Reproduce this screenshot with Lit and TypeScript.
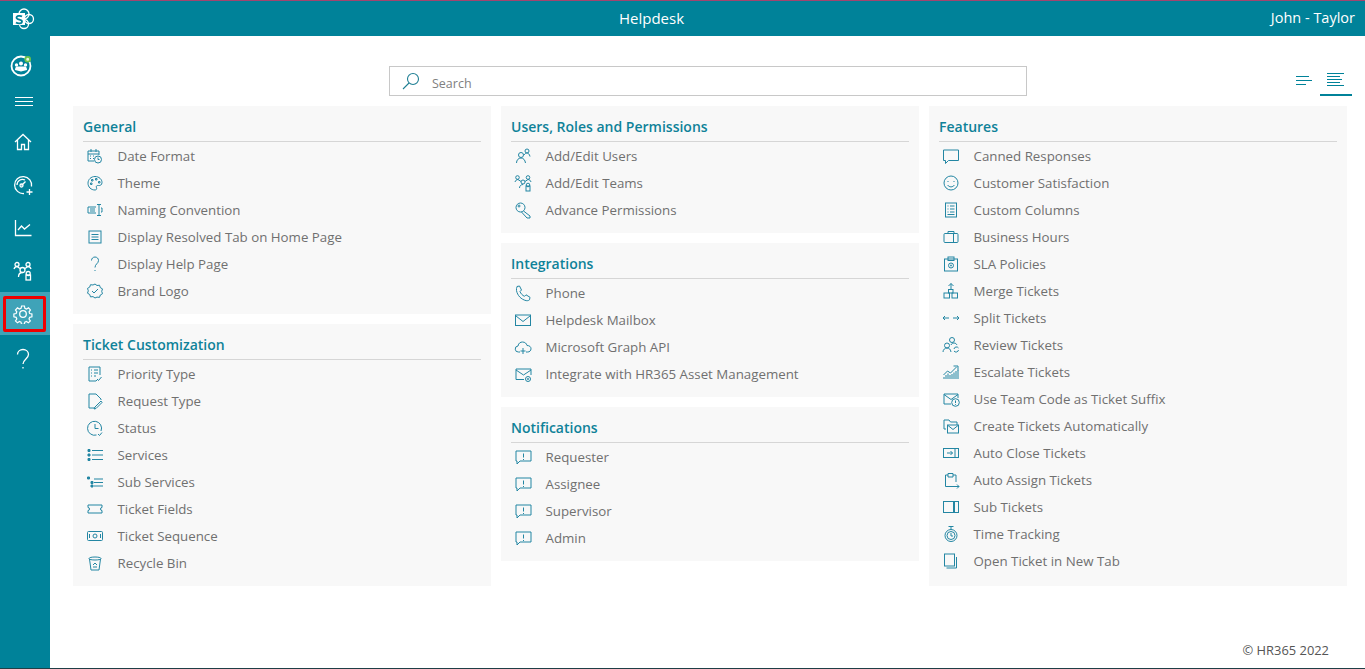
import { LitElement, html, svg, css } from "lit";
import { customElement } from "lit/decorators.js";

// all list icons share a 18x18 viewBox, stroked in the teal colour
const icons: Record<string, unknown> = {
  date: svg`<path d="M2 4h11v4M2 4v10h6M2 7h11M5 2v3M10 2v3M4 9h1M7 9h1M4 11.500h1M7 11.500h1"/><circle cx="12" cy="12.500" r="3.500"/><path d="M12 10.500v2h1.500"/>`,
  theme: svg`<path d="M9 2.500c4 0 7 2.800 7 6 0 2.500-2 3.300-3.500 3-1.700-.3-2.800.7-2 2.300.6 1.300-.3 2.200-1.500 2.200-4 0-7-3-7-6.800 0-3.700 3-6.700 7-6.700z"/><path d="M5.500 5.500h1.500v1.500h-1.500zM9.500 4.500h1.500v1.500h-1.500zM12.500 7.500h1.500v1.500h-1.500zM4.500 9h1.500v1.500h-1.500z"/>`,
  naming: svg`<path d="M10 6H2v6h8M4 8h5M4 10h5M13 3.500v11M11 3.500h4M11 14.500h4M15 7h1v4h-1"/>`,
  page: svg`<rect x="3" y="3" width="12" height="12"/><path d="M5.500 6.500h7M5.500 9h7M5.500 11.500h7"/>`,
  help: svg`<path d="M5.500 5.500c0-2 1.500-3.500 3.500-3.500s3.500 1.500 3.500 3.500c0 3-3.500 3.500-3.500 7M9 15v1"/>`,
  badge: svg`<path d="M9 2l2 1.500 2.500-.3.800 2.400 2.200 1.300-.8 2.400.8 2.400-2.200 1.300-.8 2.400-2.500-.3L9 16l-2-1.400-2.500.3-.8-2.400-2.200-1.300.8-2.400-.8-2.400 2.200-1.300.8-2.400 2.500.3z"/><path d="M6 9l2 2 4-4"/>`,
  priority: svg`<path d="M14 10V2H3v14h7l1-1M5 5h1M8 5h4M5 8h1M8 8h4M5 11h1M8 11h2M11 14l1.500 1.500L15.500 12"/>`,
  request: svg`<path d="M9 16H3V2h7l5 5v1M15 9l-6 6-1 2 2-.5 6-6z"/>`,
  status: svg`<path d="M15 12a7 7 0 1 0-4.500 4M9 5v4.500h3.500M12 15l1.500 1.500 2.500-3"/>`,
  services: svg`<path d="M6 4.500h11M6 9h11M6 13.500h11" /><path d="M2 3.500h2v2H2zM2 8h2v2H2zM2 12.500h2v2H2z" fill="currentColor"/>`,
  sub: svg`<path d="M8 6h9M8 9.500h9M8 13h9"/><path d="M1.500 4h2v2h-2zM5 8.500h2v2H5zM5 12h2v2H5z" fill="currentColor"/>`,
  ticket: svg`<path d="M2 5h14v2.500a1.500 1.500 0 0 0 0 3V13H2v-2.500a1.500 1.500 0 0 0 0-3z"/>`,
  sequence: svg`<rect x="1.500" y="4.500" width="15" height="9" rx="1"/><circle cx="9" cy="9" r="2"/><path d="M3.500 7v4M14.500 7v4"/>`,
  bin: svg`<path d="M3 4.500c0-2 12-2 12 0s-12 2-12 0zM3.500 5l1.500 11h8l1.500-11M7 11l2-2 2 2M7 13h4"/>`,
  users: svg`<circle cx="7" cy="8" r="2.500"/><path d="M2.500 16c0-3 2-5 4.500-5s4 2 4.500 5"/><circle cx="13" cy="4" r="2"/><path d="M10 8c1-1.500 2-2 3-2s2.500 1 3 3.500"/>`,
  teams: svg`<circle cx="3.500" cy="3.500" r="1.800"/><circle cx="14" cy="3.500" r="1.800"/><circle cx="9" cy="8" r="2"/><path d="M1 8c.5-1.500 1.500-2.500 3-2.500l3 2M17 8c-.5-1.500-1.500-2.500-3-2.500l-3 2M5.500 14c0-2 1.500-3.500 3.500-3.500"/><rect x="12" y="12" width="4" height="5"/><circle cx="14" cy="11" r="1.800"/>`,
  key: svg`<circle cx="6.500" cy="6.500" r="4.500"/><circle cx="5" cy="5" r="1"/><path d="M9.500 10l6.500 5v2h-3l-5.500-6"/>`,
  phone: svg`<path d="M3 2.500l2.500-.5 2 4-1.500 1.500c.7 2 2.500 4 4.500 4.800l1.500-1.500 4 2.500-.5 2.500c-1 1-2.500 1-3.500.8-5-1.300-8.500-5-9.500-10-.2-1.500 0-2.800.5-3.600z"/>`,
  mail: svg`<rect x="1.500" y="4" width="15" height="10.500"/><path d="M2 5l7 5.500L16 5"/>`,
  cloud: svg`<path d="M6 14H4.500a3 3 0 0 1-.5-6c.5-3 2.500-4 4.500-4 2.500 0 4 1.500 4.500 3.500 2.500 0 4 1.300 4 3.300 0 2-1.500 3.200-3.500 3.200H12M9 10v6M6.500 13h5"/>`,
  mailgear: svg`<path d="M10 14.500H2V4h15v6M2 5l7.500 5L17 5"/><circle cx="14" cy="14" r="2.500"/><circle cx="14" cy="14" r=".6"/>`,
  alert: svg`<path d="M2 3h15v10H6l-3 3v-3H2zM9.500 5.500v4M9.500 11v1"/>`,
  chat: svg`<path d="M1.500 3h15v10.500H6.500l-3 3v-3h-2z"/>`,
  smile: svg`<circle cx="9" cy="9" r="7"/><path d="M6 7v1M12 7v1M5.500 11c2 2.500 5 2.500 7 0"/>`,
  columns: svg`<rect x="3.500" y="2" width="11" height="14"/><path d="M5.500 5h1M8 5h4.500M5.500 8h1M8 8h4.500M5.500 11h1M8 11h4.500M5.500 13.500h7"/>`,
  briefcase: svg`<rect x="2" y="5.500" width="14" height="9" rx="1"/><path d="M6 5.500V3.500h6v2M11.500 5.500v9"/>`,
  sla: svg`<rect x="2.500" y="4" width="13" height="12"/><rect x="6" y="2" width="6" height="3.500"/><circle cx="9" cy="10.500" r="2.500"/><circle cx="9" cy="10.500" r=".6"/>`,
  merge: svg`<rect x="2" y="11" width="5.500" height="5"/><rect x="10" y="11" width="5.500" height="5"/><rect x="6.500" y="7.500" width="4.500" height="3.500"/><path d="M9 7V1.500M6.500 4L9 1.500 11.500 4"/>`,
  split: svg`<path d="M1 9h6M1 9l2-2M1 9l2 2M11 9h6M17 9l-2-2M17 9l-2 2"/>`,
  review: svg`<circle cx="10" cy="4" r="2.500"/><circle cx="5" cy="9.500" r="2.500"/><path d="M1 16c0-2.500 2-4 4-4s3.500 1 4 4M9 9c.5-1.500 1.500-2 3-2 1.500 0 2.500 1 3 2M12 13a2.500 2.500 0 0 1 4.500-1M16.500 14a2.500 2.500 0 0 1-4.500 1"/>`,
  escalate: svg`<path d="M1.500 12l4-4 3 2 6-6M11.500 3H16v4.500"/><path d="M2 16v-2M4 16v-4M6 16v-5.500M8 16v-4M10 16v-5M12 16v-6.500M14 16V8M16 16V7"/>`,
  teamcode: svg`<path d="M9 14H2V4h14v4M2 4.500l7 5 7-5"/><circle cx="13.500" cy="12.500" r="3.800"/><path d="M13.500 10.500v2.500M13.500 14v.8"/>`,
  create: svg`<path d="M2 12V3h5l1.500 2H15v3M2 12h2"/><rect x="5.500" y="8" width="11" height="8"/><path d="M6 8.500l5 4 5-4"/>`,
  close: svg`<rect x="1.500" y="4.500" width="15" height="9"/><path d="M13 4.500v9M5 9h5.500M8.500 7l2 2-2 2"/>`,
  assign: svg`<path d="M13 15.500H3.500V4H6M11 4h3v7M6 2.500h5V6H6zM11 15.500h6M15 13.500l2 2-2 2"/>`,
  subt: svg`<rect x="1.500" y="3.500" width="10" height="11"/><rect x="12.500" y="3.500" width="4" height="11"/>`,
  timer: svg`<circle cx="9" cy="10.500" r="6"/><circle cx="9" cy="10.500" r="4"/><path d="M9 8v3h2M6.500 1.500h5M9 1.500v3"/>`,
  open: svg`<rect x="2.500" y="2" width="10" height="12"/><path d="M14.500 5v11h-10"/>`,
};

type Item = [string, string];
type Section = { title: string; items: Item[] };

const left: Section[] = [
  {
    title: "General",
    items: [
      ["date", "Date Format"],
      ["theme", "Theme"],
      ["naming", "Naming Convention"],
      ["page", "Display Resolved Tab on Home Page"],
      ["help", "Display Help Page"],
      ["badge", "Brand Logo"],
    ],
  },
  {
    title: "Ticket Customization",
    items: [
      ["priority", "Priority Type"],
      ["request", "Request Type"],
      ["status", "Status"],
      ["services", "Services"],
      ["sub", "Sub Services"],
      ["ticket", "Ticket Fields"],
      ["sequence", "Ticket Sequence"],
      ["bin", "Recycle Bin"],
    ],
  },
];

const middle: Section[] = [
  {
    title: "Users, Roles and Permissions",
    items: [
      ["users", "Add/Edit Users"],
      ["teams", "Add/Edit Teams"],
      ["key", "Advance Permissions"],
    ],
  },
  {
    title: "Integrations",
    items: [
      ["phone", "Phone"],
      ["mail", "Helpdesk Mailbox"],
      ["cloud", "Microsoft Graph API"],
      ["mailgear", "Integrate with HR365 Asset Management"],
    ],
  },
  {
    title: "Notifications",
    items: [
      ["alert", "Requester"],
      ["alert", "Assignee"],
      ["alert", "Supervisor"],
      ["alert", "Admin"],
    ],
  },
];

const right: Section[] = [
  {
    title: "Features",
    items: [
      ["chat", "Canned Responses"],
      ["smile", "Customer Satisfaction"],
      ["columns", "Custom Columns"],
      ["briefcase", "Business Hours"],
      ["sla", "SLA Policies"],
      ["merge", "Merge Tickets"],
      ["split", "Split Tickets"],
      ["review", "Review Tickets"],
      ["escalate", "Escalate Tickets"],
      ["teamcode", "Use Team Code as Ticket Suffix"],
      ["create", "Create Tickets Automatically"],
      ["close", "Auto Close Tickets"],
      ["assign", "Auto Assign Tickets"],
      ["subt", "Sub Tickets"],
      ["timer", "Time Tracking"],
      ["open", "Open Ticket in New Tab"],
    ],
  },
];

@customElement("app-root")
export class AppRoot extends LitElement {
  static styles = css`
    :host {
      display: block;
      height: 669px;
      overflow: hidden;
      box-sizing: border-box;
      background: #ffffff;
      font-family: "Open Sans", "Noto Sans", sans-serif;
      border-top: 1px solid #a3456f;
      border-bottom: 1px solid #1f3f47;
    }

    .shell {
      display: grid;
      grid-template-columns: 50px 1fr;
      grid-template-rows: 35px 1fr;
      height: 100%;
      background: #008299;
    }

    .topbar {
      display: grid;
      grid-template-columns: 569px auto 1fr;
      align-items: center;
      color: #ffffff;
      font-size: 14.5px;
      padding: 0 10px 2px 0;
    }

    .topbar .title {
      font-size: 15px;
    }

    .topbar .user {
      justify-self: end;
    }

    .side {
      grid-row: 1 / 3;
      grid-column: 1;
      display: flex;
      flex-direction: column;
      align-items: center;
      color: #ffffff;
    }

    .side svg {
      display: block;
      fill: none;
      stroke: currentColor;
      stroke-width: 1.300;
    }

    .side .logo {
      margin: 7px 5px 0 0;
    }

    .side .team {
      margin: 23px 8px 0 0;
      stroke-width: 1.800;
    }

    .side .burger {
      margin: 20px 2px 0 0;
      stroke-width: 1;
    }

    .nav {
      width: 50px;
      height: 43px;
      display: flex;
      align-items: center;
      justify-content: center;
      box-sizing: border-box;
      padding-right: 5px;
    }

    .nav.first {
      margin-top: 13px;
    }

    .nav.help {
      margin-top: 2px;
    }

    .nav.active {
      background: #3fa3b8;
      position: relative;
    }

    .nav.active::after {
      content: "";
      position: absolute;
      left: 3px;
      top: 4px;
      width: 43px;
      height: 36px;
      box-sizing: border-box;
      border: 3px solid #f00000;
      border-radius: 2px;
    }

    main {
      grid-column: 2;
      grid-row: 2;
      background: #ffffff;
      display: flex;
      flex-direction: column;
      padding: 30px 18px 0 23px;
      min-height: 0;
    }

    .toolbar {
      display: grid;
      grid-template-columns: 316px 638px 1fr;
      height: 40px;
      color: #008299;
    }

    .search {
      grid-column: 2;
      height: 30px;
      box-sizing: border-box;
      border: 1px solid #c8c8c8;
      display: flex;
      align-items: center;
      gap: 11px;
      padding-left: 11px;
      color: #808080;
      font-size: 12.500px;
    }

    .search span {
      margin-top: 4px;
    }

    .search svg {
      fill: none;
      stroke: #1f7f94;
      stroke-width: 1.100;
    }

    .views {
      justify-self: end;
      display: flex;
      align-items: flex-start;
      margin-right: -5px;
    }

    .view {
      width: 32px;
      height: 30px;
      box-sizing: border-box;
      display: flex;
      align-items: center;
      justify-content: center;
    }

    .view.on {
      border-bottom: 2px solid #008299;
    }

    .view svg {
      stroke: #008299;
      stroke-width: 1;
      fill: none;
    }

    .columns {
      display: grid;
      grid-template-columns: repeat(3, 1fr);
      gap: 10px;
    }

    .column {
      display: flex;
      flex-direction: column;
      gap: 10px;
    }

    .column.full .card {
      flex: 1;
    }

    .card {
      background: #f8f8f8;
      padding: 0 10px 10px;
    }

    h2 {
      margin: 0;
      height: 36px;
      box-sizing: border-box;
      border-bottom: 1px solid #d6d6d6;
      color: #0f8299;
      font-size: 14px;
      font-weight: 600;
      line-height: 41px;
    }

    .item {
      height: 27px;
      display: flex;
      align-items: center;
      color: #707070;
      font-size: 13.300px;
      white-space: nowrap;
    }

    .item svg {
      width: 18px;
      height: 18px;
      margin: 0 13.500px 0 3px;
      flex: none;
      fill: none;
      stroke: #2386a3;
      stroke-width: 1;
      color: #2386a3;
    }

    .foot {
      margin-top: auto;
      margin-bottom: 9px;
      padding-right: 18px;
      text-align: right;
      font-size: 12.900px;
      color: #555555;
    }
  `;

  private renderSection(s: Section) {
    return html`<section class="card">
      <h2>${s.title}</h2>
      ${s.items.map(
        ([icon, label]) => html`<div class="item">
          <svg viewBox="0 0 18 18">${icons[icon]}</svg>
          <span>${label}</span>
        </div>`
      )}
    </section>`;
  }

  render() {
    return html`<div class="shell">
      <aside class="side">
        <svg class="logo" width="24" height="22" viewBox="0 0 24 22">
          <circle cx="13" cy="6" r="5" />
          <circle cx="18" cy="11" r="4.500" />
          <circle cx="13" cy="16" r="4.500" />
          <rect x="2" y="5" width="12" height="12" fill="#ffffff" stroke="none" />
          <path d="M11 8.500C9.500 7.500 5.500 7.500 5.500 9.800s5.500 1.500 5.500 3.700-4 2.500-6 1" stroke="#008299" stroke-width="1.800" />
        </svg>
        <svg class="team" width="24" height="24" viewBox="0 0 24 24">
          <circle cx="12" cy="13" r="9.500" />
          <circle cx="12" cy="10.500" r="2" fill="#ffffff" stroke="none" />
          <circle cx="7.500" cy="12" r="1.700" fill="#ffffff" stroke="none" />
          <circle cx="16.500" cy="12" r="1.700" fill="#ffffff" stroke="none" />
          <path d="M6 17c0-2.500 1-3.500 2.500-3.500h7c1.500 0 2.500 1 2.500 3.500l-6 1.500z" fill="#ffffff" stroke="none" />
          <circle cx="18.700" cy="6.300" r="2.400" fill="#e8f5e0" stroke="#6cc24a" />
        </svg>
        <svg class="burger" width="18" height="10" viewBox="0 0 18 10">
          <path d="M0 .5h18M0 4.500h18M0 8.500h18" />
        </svg>
        <div class="nav first">
          <svg width="18" height="18" viewBox="0 0 18 18">
            <path d="M1 9l8-7.500L17 9M3.500 7v9.500h4v-5h3v5h4V7" />
          </svg>
        </div>
        <div class="nav">
          <svg width="22" height="22" viewBox="0 0 22 22">
            <path d="M12 19.500a8.500 8.500 0 1 1 7.500-7" />
            <path d="M5 11a5.500 5.500 0 0 1 8-5M9.500 11.500l4-4" />
            <circle cx="9.500" cy="11.500" r="1.500" />
            <path d="M17.500 15v6M14.500 18h6" />
          </svg>
        </div>
        <div class="nav">
          <svg width="18" height="18" viewBox="0 0 18 18">
            <path d="M1.500 1v15.500h16M4 11l3.500-4 3 3L16 5.500" />
          </svg>
        </div>
        <div class="nav">
          <svg width="20" height="20" viewBox="0 0 20 20">
            <circle cx="4" cy="3.500" r="2" />
            <circle cx="15" cy="3.500" r="2" />
            <circle cx="9.500" cy="9" r="2.500" />
            <path d="M1 8c.5-1.500 1.500-2.500 3-2.500l3 2M18 8c-.5-1.500-1.500-2.500-3-2.500l-3 2M5.500 16c0-2.500 1.500-4.500 4-4.500" />
            <rect x="13" y="14" width="4.500" height="5" />
            <circle cx="15.200" cy="12.500" r="2" />
          </svg>
        </div>
        <div class="nav active">
          <svg width="20" height="20" viewBox="0 0 20 20">
            <path d="M8.500 1.500h3l.5 2.500 1.700.8 2.200-1.300 2 2.200-1.400 2 .6 1.800 2.400.5v3l-2.400.5-.7 1.800 1.400 2-2.100 2.100-2.100-1.400-1.700.7-.5 2.400h-3l-.5-2.400-1.700-.7-2.100 1.400-2.100-2.100 1.400-2-.7-1.800-2.400-.5v-3l2.400-.5.700-1.800-1.400-2 2.100-2.200 2.100 1.300 1.700-.8z" transform="translate(.6 .6) scale(.94)" />
            <circle cx="10" cy="10" r="3.300" />
          </svg>
        </div>
        <div class="nav help">
          <svg width="18" height="22" viewBox="0 0 18 22">
            <path d="M3.500 6.500C3.500 3.500 6 1.500 9 1.500s5.500 2 5.500 5c0 4-5.500 5-5.500 9.500M9 19v1.500" />
          </svg>
        </div>
      </aside>

      <header class="topbar">
        <span></span>
        <span class="title">Helpdesk</span>
        <span class="user">John - Taylor</span>
      </header>

      <main>
        <div class="toolbar">
          <label class="search">
            <svg width="20" height="18" viewBox="0 0 20 18">
              <circle cx="12" cy="7" r="5.500" />
              <path d="M8 11l-6 6" />
            </svg>
            <span>Search</span>
          </label>
          <div class="views">
            <div class="view">
              <svg width="16" height="10" viewBox="0 0 16 10">
                <path d="M0 .5h13M0 4.500h16M0 8.500h10" />
              </svg>
            </div>
            <div class="view on">
              <svg width="18" height="14" viewBox="0 0 18 14">
                <path d="M0 .5h17M0 3.500h13M0 6.500h15M0 9.500h13M0 12.500h17" />
              </svg>
            </div>
          </div>
        </div>
        <div class="columns">
          <div class="column">${left.map((s) => this.renderSection(s))}</div>
          <div class="column">${middle.map((s) => this.renderSection(s))}</div>
          <div class="column full">${right.map((s) => this.renderSection(s))}</div>
        </div>
        <div class="foot">© HR365 2022</div>
      </main>
    </div>`;
  }
}
